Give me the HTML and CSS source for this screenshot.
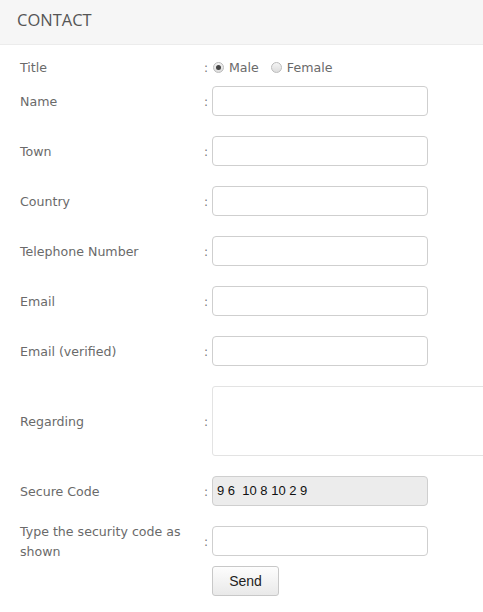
FILE: index.html
```html
<!DOCTYPE html>
<html>
<head>
<meta charset="utf-8">
<link rel="stylesheet" href="styles.css">
</head>
<body>
<div class="page">
  <div class="header">CONTACT</div>
  <form class="form">
    <div class="row row-title">
      <div class="label">Title</div>
      <div class="colon">:</div>
      <div class="field radios">
        <span class="radio checked"></span><span class="rtext">Male</span>
        <span class="radio"></span><span class="rtext">Female</span>
      </div>
    </div>
    <div class="row">
      <div class="label">Name</div>
      <div class="colon">:</div>
      <div class="field"><div class="input"></div></div>
    </div>
    <div class="row">
      <div class="label">Town</div>
      <div class="colon">:</div>
      <div class="field"><div class="input"></div></div>
    </div>
    <div class="row">
      <div class="label">Country</div>
      <div class="colon">:</div>
      <div class="field"><div class="input"></div></div>
    </div>
    <div class="row">
      <div class="label">Telephone Number</div>
      <div class="colon">:</div>
      <div class="field"><div class="input"></div></div>
    </div>
    <div class="row">
      <div class="label">Email</div>
      <div class="colon">:</div>
      <div class="field"><div class="input"></div></div>
    </div>
    <div class="row">
      <div class="label">Email (verified)</div>
      <div class="colon">:</div>
      <div class="field"><div class="input"></div></div>
    </div>
    <div class="row row-tall">
      <div class="label">Regarding</div>
      <div class="colon">:</div>
      <div class="field"><div class="textarea"></div></div>
    </div>
    <div class="row">
      <div class="label">Secure Code</div>
      <div class="colon">:</div>
      <div class="field"><div class="input code">9 6&nbsp; 10 8 10 2 9</div></div>
    </div>
    <div class="row">
      <div class="label">Type the security code as shown</div>
      <div class="colon">:</div>
      <div class="field"><div class="input"></div></div>
    </div>
    <div class="row row-btn">
      <div class="label"></div>
      <div class="colon"></div>
      <div class="field"><div class="button">Send</div></div>
    </div>
  </form>
</div>
</body>
</html>
```
FILE: styles.css
```css
html, body {
  margin: 0;
  padding: 0;
  background: #fff;
  overflow: hidden;
}
.page {
  width: 483px;
  overflow: hidden;
  font-family: "DejaVu Sans", Verdana, sans-serif;
  font-size: 12.6px;
  color: #6a6a6a;
}
.header {
  height: 44px;
  background: #f6f6f6;
  border-bottom: 1px solid #ececec;
  box-sizing: content-box;
  padding-left: 17px;
  font-family: "Open Sans", sans-serif;
  font-size: 16.5px;
  line-height: 40px;
  color: #555;
}
.form {
  display: flex;
  flex-direction: column;
  gap: 20px;
  padding: 11px 0 0 20px;
}
.row {
  display: grid;
  grid-template-columns: 184px 8px 1fr;
  grid-template-rows: 30px;
  align-items: center;
}
.row-tall {
  grid-template-rows: 70px;
}
.row-title {
  grid-template-rows: 22px;
  margin-bottom: -12px;
}
.row-btn {
  margin-top: -10px;
}
.label {
  line-height: 20px;
  padding-right: 10px;
  padding-top: 1px;
}
.colon {
  font-size: 12px;
  color: #777;
  padding-top: 1px;
}
.field {
  display: flex;
  align-items: center;
}
.radios {
  margin-left: 1px;
}
.radio {
  width: 9px;
  height: 9px;
  border-radius: 50%;
  border: 1px solid #bbb;
  background: linear-gradient(#f4f4f4, #ddd);
  position: relative;
  margin-right: 5px;
}
.radio.checked::after {
  content: "";
  position: absolute;
  left: 2px;
  top: 2px;
  width: 5px;
  height: 5px;
  border-radius: 50%;
  background: #444;
}
.rtext {
  margin-right: 12px;
}
.input {
  width: 214px;
  height: 28px;
  border: 1px solid #cfcfcf;
  border-radius: 4px;
  background: #fff;
}
.input.code {
  background: #ececec;
  font-family: "Liberation Sans", Arial, sans-serif;
  font-size: 13px;
  color: #111;
  line-height: 28px;
  padding-left: 4px;
  width: 210px;
}
.textarea {
  width: 300px;
  height: 68px;
  border: 1px solid #e3e3e3;
  border-radius: 3px;
  background: #fff;
}
.button {
  width: 65px;
  height: 28px;
  border: 1px solid #c8c8c8;
  border-radius: 3px;
  background: linear-gradient(#fdfdfd, #e9e9e9);
  font-family: "Liberation Sans", Arial, sans-serif;
  font-size: 14px;
  color: #222;
  text-align: center;
  line-height: 28px;
}
```
